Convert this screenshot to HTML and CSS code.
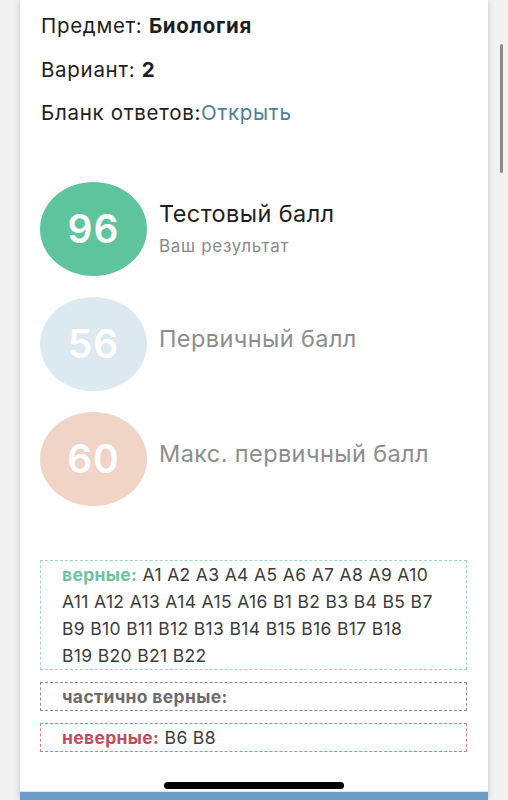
FILE: index.html
```html
<!DOCTYPE html>
<html lang="ru">
<head>
<meta charset="utf-8">
<link rel="stylesheet" href="styles.css">
</head>
<body>
<div class="page">
  <div class="info">
    <div class="info-line">Предмет: <b>Биология</b></div>
    <div class="info-line">Вариант: <b>2</b></div>
    <div class="info-line">Бланк ответов:<a class="link">Открыть</a></div>
  </div>
  <div class="scores">
    <div class="score-row">
      <div class="bubble bubble-green">96</div>
      <div class="score-text">
        <div class="score-title dark">Тестовый балл</div>
        <div class="score-sub">Ваш результат</div>
      </div>
    </div>
    <div class="score-row">
      <div class="bubble bubble-blue">56</div>
      <div class="score-text">
        <div class="score-title">Первичный балл</div>
      </div>
    </div>
    <div class="score-row">
      <div class="bubble bubble-peach">60</div>
      <div class="score-text">
        <div class="score-title">Макс. первичный балл</div>
      </div>
    </div>
  </div>
  <div class="answers">
    <div class="box box-green"><span class="label label-green">верные:</span> A1 A2 A3 A4 A5 A6 A7 A8 A9 A10<br>A11 A12 A13 A14 A15 A16 B1 B2 B3 B4 B5 B7<br>B9 B10 B11 B12 B13 B14 B15 B16 B17 B18<br>B19 B20 B21 B22</div>
    <div class="box box-grey"><span class="label label-grey">частично верные:</span></div>
    <div class="box box-red"><span class="label label-red">неверные:</span> B6 B8</div>
  </div>
  <div class="spacer"></div>
  <div class="home-area"><div class="home-pill"></div></div>
  <div class="bottom-bar"></div>
</div>
<div class="scrollbar"></div>
</body>
</html>
```
FILE: styles.css
```css
html, body {
  margin: 0;
  padding: 0;
}
body {
  background: #f1f1f1;
  font-family: Inter, "Noto Sans", sans-serif;
  width: 508px;
  height: 800px;
  overflow: hidden;
  position: relative;
}
.page {
  margin-left: 20px;
  width: 468px;
  height: 800px;
  background: #fff;
  box-shadow: 0 0 6px rgba(0,0,0,0.18);
  display: flex;
  flex-direction: column;
}
.info {
  padding: 4px 21px 0 21px;
}
.info-line {
  font-size: 20.5px;
  line-height: 43.5px;
  color: #1e1e1e;
  letter-spacing: 0.7px;
}
.info-line b {
  font-weight: 700;
}
.link {
  color: #4d7f96;
}
.scores {
  margin-top: 47px;
  padding-left: 20px;
  display: flex;
  flex-direction: column;
  gap: 21px;
}
.score-row {
  display: flex;
  align-items: center;
  gap: 12px;
  height: 94px;
}
.bubble {
  width: 107px;
  height: 94px;
  border-radius: 50%;
  display: flex;
  align-items: center;
  justify-content: center;
  color: #fff;
  font-size: 39px;
  font-weight: 600;
  letter-spacing: 1px;
  flex-shrink: 0;
}
.bubble-green { background: #5ec49b; }
.bubble-blue { background: #dce9f0; }
.bubble-peach { background: #f0d4c6; }
.score-title {
  font-size: 23.5px;
  color: #8d8d8d;
  letter-spacing: 0.4px;
  padding-bottom: 10px;
}
.score-title.dark {
  color: #1e1e1e;
  line-height: 30px;
  padding-bottom: 0;
}
.score-sub {
  font-size: 17px;
  color: #8a8a8a;
  letter-spacing: 0.7px;
  margin-top: 7px;
  padding-bottom: 3px;
}
.answers {
  margin-top: 54px;
  padding: 0 21px 0 20px;
  display: flex;
  flex-direction: column;
  gap: 12px;
}
.box {
  border: 1.5px dashed;
  padding: 0 10px 0 21px;
  font-size: 17.5px;
  line-height: 27px;
  letter-spacing: 0.35px;
  color: #3c3c3c;
  min-height: 26px;
  white-space: nowrap;
}
.box-green { border-color: #9fd6bf; }
.box-grey { border-color: #8f8f8f; }
.box-red { border-color: #d77c86; }
.label { font-weight: 700; }
.label-green { color: #6cc39f; }
.label-grey { color: #6c6c6c; }
.label-red { color: #c14d5c; }
.spacer { flex: 1; }
.home-area {
  height: 16px;
  padding-top: 7px;
  box-sizing: border-box;
  display: flex;
  justify-content: center;
  align-items: flex-start;
}
.home-pill {
  width: 180px;
  height: 7px;
  border-radius: 4px;
  background: #000;
}
.bottom-bar {
  height: 8px;
  background: #6b9dc6;
  border-top: 1px solid #dfe7ee;
}
.scrollbar {
  position: absolute;
  left: 500px;
  top: 44px;
  width: 3px;
  height: 129px;
  border-radius: 2px;
  background: #8a8a8a;
}
```
